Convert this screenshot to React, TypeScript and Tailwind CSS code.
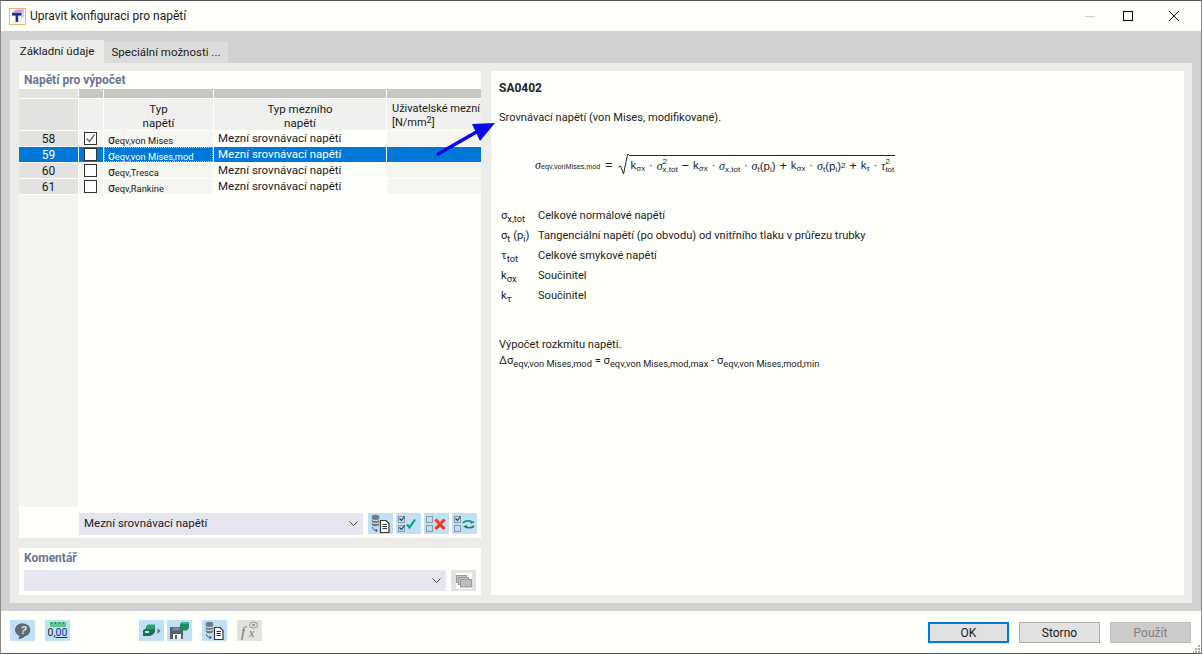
import React from "react";

const Sub = ({ children }: { children: React.ReactNode }) => (
  <span className="relative top-[3px] text-[9.300px] leading-none">{children}</span>
);

const IconBtn = ({ children, off, className = "" }: { children: React.ReactNode; off?: boolean; className?: string }) => (
  <div className={`flex h-[21px] w-[25px] shrink-0 items-center justify-center ${off ? "bg-[#e2e2e0]" : "bg-[#c0e0f8]"} ${className}`}>
    {children}
  </div>
);

const DbDoc = () => (
  <svg width="21" height="19" viewBox="0 0 21 19" fill="none">
    <ellipse cx="5.500" cy="2.500" rx="3.700" ry="1.800" fill="#6f7a82" />
    <path d="M1.800 2.500v8c0 1 1.700 1.800 3.700 1.800s3.700-.8 3.700-1.800v-8" fill="#6f7a82" />
    <path d="M1.800 5.500c1 1.300 6.400 1.300 7.400 0M1.800 8.500c1 1.300 6.400 1.300 7.400 0" stroke="#e4eef4" strokeWidth="1" />
    <path d="M2.500 13c0 2.500 1.500 3.500 4.500 3.500" stroke="#4a5a64" strokeWidth="1" />
    <path d="M5.500 15l2 1.500l-2 1.500" stroke="#4a5a64" strokeWidth="1" />
    <path d="M10.500 6.500h5.500l3 3v9h-8.500z" fill="#fff" stroke="#333" strokeWidth="1.200" />
    <path d="M12.500 10.500h4.500M12.500 12.500h4.500M12.500 14.500h4.500" stroke="#333" strokeWidth="1" />
  </svg>
);

const Cb = ({ x, y, on }: { x: number; y: number; on?: boolean }) => (
  <g>
    <rect x={x + 0.5} y={y + 0.5} width="6" height="6" fill="#c8dcea" stroke="#8a9aa6" />
    {on && <path d={`M${x + 1.500} ${y + 2.500}l2 2l3-4`} stroke="#25343e" strokeWidth="1.100" fill="none" />}
  </g>
);

const Check2 = ({ variant }: { variant: "check" | "x" | "swap" }) => (
  <svg width="23" height="19" viewBox="0 0 23 19" fill="none">
    <Cb x={1} y={2} on={variant !== "x"} />
    <Cb x={1} y={11} on={variant === "check"} />
    {variant === "check" && <path d="M10 10.500l2.500 3l5.500-8" stroke="#00a878" strokeWidth="2.200" />}
    {variant === "x" && <path d="M10.500 5.500l9 9.500M19.500 5.500l-9 9.500" stroke="#f43b1c" strokeWidth="3.200" />}
    {variant === "swap" && (
      <g strokeWidth="1.800">
        <path d="M10 9c2-2.500 6-2.500 9-1" stroke="#12a078" />
        <path d="M22 8l-4 2l-1-3.500z" fill="#12a078" />
        <path d="M21 12c-2 2-6 2-8.500 1" stroke="#2a7a50" />
        <path d="M10 12.500l4-1.500l0 3.500z" fill="#2a7a50" />
      </g>
    )}
  </svg>
);

const Row = ({ n, sel, on, label }: { n: number; sel?: boolean; on?: boolean; label: string }) => (
  <div className="flex h-[16px]">
    <div className={`mb-px mr-px flex w-[59px] items-center justify-center text-[12px] ${sel ? "bg-[#0078d7] text-white" : "bg-[#e2e2e0] text-[#1a1a1a]"}`}>{n}</div>
    <div className={`mb-px mr-px flex w-[24px] items-center justify-center ${sel ? "bg-[#0078d7]" : "bg-[#f5f6ef]"}`}>
      <div className="-ml-px flex h-[13px] w-[13px] items-center justify-center border border-[#333] bg-white">
        {on && (
          <svg width="11" height="11" viewBox="0 0 11 11" fill="none">
            <path d="M1.500 5.500l3 3l5-7" stroke="#666" strokeWidth="1.300" />
          </svg>
        )}
      </div>
    </div>
    <div className={`mb-px mr-px flex w-[109px] items-center pl-[4px] whitespace-nowrap ${sel ? "bg-[#0078d7] text-white outline-1 -outline-offset-1 outline-dotted outline-[#e8b060]" : "bg-[#f5f6ef] text-[#1a1a1a]"}`}>
      <span className="relative top-px text-[12px]">σ</span><span className="relative top-[2px] text-[9.300px]">{label}</span>
    </div>
    <div className={`mb-px mr-px flex w-[172px] items-center pl-[4px] text-[11.500px] ${sel ? "bg-[#0078d7] text-white" : "bg-[#fffffb] text-[#1a1a1a]"}`}>
      Mezní srovnávací napětí
    </div>
    <div className={`mb-px w-[94px] ${sel ? "bg-[#0078d7]" : "bg-[#f5f6ef]"}`} />
  </div>
);

const Sm = ({ children }: { children: React.ReactNode }) => <span className="relative top-[2px] text-[8px]">{children}</span>;
const Gr = ({ children }: { children: React.ReactNode }) => <span className="[font-family:'Liberation_Serif',serif] italic text-[12px]">{children}</span>;
const Ss = ({ sup, sub }: { sup: string; sub: string }) => (
  <span className="flex flex-col text-[8px] leading-[8px]"><span>{sup}</span><span>{sub}</span></span>
);

const Formula = () => (
  <div className="mt-[21px] flex h-[32px] items-center pl-[36px] text-[#222] [font-family:'Liberation_Sans',sans-serif] text-[11.500px] whitespace-nowrap">
    <span className="flex w-[362px] items-center pt-[4px]">
      <Gr>σ</Gr>
      <span className="relative top-[2px] w-[56px] shrink-0 text-[7.200px]">eqv,vonMises,mod</span>
      <span className="ml-[8px] mr-[5px] text-[13px]">=</span>
      <svg width="11" height="22" viewBox="0 0 11 22" fill="none" className="shrink-0">
        <path d="M0.500 13l2-1l3 8l4-19.500h1.500" stroke="#222" strokeWidth="1" />
      </svg>
      <span className="flex h-[21px] w-[266px] shrink-0 items-center justify-between border-t border-[#222] pl-[2px] pt-[1px]">
        <span>k<Sm>σx</Sm></span><span>·</span>
        <span className="flex items-center"><Gr>σ</Gr><Ss sup="2" sub="x,tot" /></span>
        <span className="text-[13px]">−</span>
        <span>k<Sm>σx</Sm></span><span>·</span>
        <span><Gr>σ</Gr><Sm>x,tot</Sm></span><span>·</span>
        <span><Gr>σ</Gr><Sm>t</Sm>(p<Sm>i</Sm>)</span>
        <span className="text-[13px]">+</span>
        <span>k<Sm>σx</Sm></span><span>·</span>
        <span><Gr>σ</Gr><Sm>t</Sm>(p<Sm>i</Sm>)<sup className="relative -top-[2px] align-baseline text-[8px]">2</sup></span>
        <span className="text-[13px]">+</span>
        <span>k<Sm>τ</Sm></span><span>·</span>
        <span className="flex items-center"><Gr>τ</Gr><Ss sup="2" sub="tot" /></span>
      </span>
    </span>
  </div>
);

const Legend = ({ sym, text }: { sym: React.ReactNode; text: string }) => (
  <div className="flex h-[20px] items-center">
    <span className="w-[39px] pl-[2px] text-[11.200px]">{sym}</span>
    <span>{text}</span>
  </div>
);

const Chevron = () => (
  <svg width="9" height="6" viewBox="0 0 9 6" fill="none"><path d="M0.500 0.500l4 4l4-4" stroke="#444" /></svg>
);

export default function App() {
  return (
    <div className="relative flex h-[654px] w-[1202px] flex-col overflow-hidden border-x border-y border-x-[#8a8a8a] border-y-[#555] bg-white text-[12px] text-[#1a1a1a] [font-family:'Roboto','Liberation_Sans',sans-serif]">
      {/* title bar */}
      <div className="flex h-[30px] shrink-0 items-center bg-[#fffffb] pl-[8px]">
        <svg width="17" height="17" viewBox="0 0 17 17" fill="none" className="shrink-0">
          <rect x="0.500" y="0.500" width="16" height="16" fill="#fff" stroke="#f0b070" />
          <path d="M3 5l4-3.500h8v3l-3 3H3z" fill="#b9a0e8" />
          <path d="M12 4.500l3-3v7l-3 3z" fill="#d8c8f4" />
          <path d="M3 5h9.500v2.500H9.200V14H6.600V7.500H3z" fill="#2c2a88" />
        </svg>
        <span className="ml-[4px] text-[12px] text-[#1a1a1a]">Upravit konfiguraci pro napětí</span>
        <div className="ml-auto flex items-center">
          <div className="mr-[28px] h-px w-[10px] bg-[#ccc]" />
          <div className="mr-[36px] h-[10px] w-[10px] border border-black" />
          <svg width="10" height="10" viewBox="0 0 10 10" className="mr-[22px]"><path d="M0 0l10 10M10 0L0 10" stroke="#111" strokeWidth="1" /></svg>
        </div>
      </div>

      {/* main */}
      <div className="flex h-[580px] shrink-0 flex-col bg-[#d1d1d1] px-[9px] pb-[8px] pt-[9px]">
        <div className="flex h-[23px] shrink-0 items-stretch text-[11.500px]">
          <div className="flex w-[94px] items-center justify-center bg-[#ecece8]">Základní údaje</div>
          <div className="mt-[2px] flex w-[124px] items-center justify-center bg-[#dcdcdb]">Speciální možnosti ...</div>
        </div>
        <div className="flex min-h-0 flex-1 gap-[10px] bg-[#ecece8] py-[8px] pl-[9px] pr-[8px]">
          {/* left col */}
          <div className="flex w-[462px] shrink-0 flex-col gap-[10px]">
            <div className="flex h-[467px] flex-col bg-[#fffffb]">
              <div className="flex h-[18px] shrink-0 items-center pl-[5px] text-[12px] font-bold text-[#6a7596]">Napětí pro výpočet</div>
              <div className="flex h-[9px] shrink-0">
                <div className="mr-px w-[59px] bg-[#e2e2e0]" />
                <div className="mr-px w-[24px] bg-[#c8c8c5]" />
                <div className="mr-px w-[109px] bg-[#c8c8c5]" />
                <div className="mr-px w-[172px] bg-[#c8c8c5]" />
                <div className="w-[94px] bg-[#c8c8c5]" />
              </div>
              <div className="mt-px flex h-[31px] shrink-0 text-[11.500px] leading-[14px]">
                <div className="mr-px w-[59px] bg-[#e2e2e0]" />
                <div className="mr-px w-[24px] bg-[#f0f0ef]" />
                <div className="mr-px flex w-[109px] flex-col items-center justify-center bg-[#f0f0ef] pt-[2px]"><span>Typ</span><span>napětí</span></div>
                <div className="mr-px flex w-[172px] flex-col items-center justify-center bg-[#f0f0ef] pt-[2px]"><span>Typ mezního</span><span>napětí</span></div>
                <div className="flex w-[94px] flex-col justify-center bg-[#f0f0ef] pl-[5px] pt-[2px] text-[11px] whitespace-nowrap"><span>Uživatelské mezní</span><span>[N/mm<sup className="relative -top-[3px] align-baseline text-[9px]">2</sup>]</span></div>
              </div>
              <div className="mt-px shrink-0">
                <Row n={58} on label="eqv,von Mises" />
                <Row n={59} sel label="eqv,von Mises,mod" />
                <Row n={60} label="eqv,Tresca" />
                <Row n={61} label="eqv,Rankine" />
              </div>
              <div className="flex min-h-0 flex-1">
                <div className="w-[59px] bg-[#f4f4f1]" />
              </div>
              <div className="flex h-[31px] shrink-0 items-start pt-[6px]">
                <div className="ml-[60px] flex h-[22px] w-[284px] items-center justify-between bg-[#e6e6f0] pl-[5px] pr-[5px] text-[11.500px]">
                  <span>Mezní srovnávací napětí</span>
                  <Chevron />
                </div>
                <IconBtn className="ml-[5px]"><DbDoc /></IconBtn>
                <IconBtn className="ml-[3px]"><Check2 variant="check" /></IconBtn>
                <IconBtn className="ml-[3px]"><Check2 variant="x" /></IconBtn>
                <IconBtn className="ml-[3px]"><Check2 variant="swap" /></IconBtn>
              </div>
            </div>
            {/* comment */}
            <div className="flex min-h-0 flex-1 flex-col bg-[#fffffb] pl-[5px]">
              <div className="mb-[2px] flex h-[20px] items-center font-bold text-[#6a7596]">Komentář</div>
              <div className="flex items-center">
                <div className="flex h-[21px] w-[422px] items-center justify-end bg-[#e6e6f0] pr-[5px]">
                  <Chevron />
                </div>
                <IconBtn off className="ml-[5px]">
                  <svg width="16" height="16" viewBox="0 0 16 16" fill="none">
                    <rect width="16" height="16" fill="#fff" />
                    <rect x="0.500" y="2.500" width="10" height="7" fill="#c4c4c4" stroke="#999" />
                    <rect x="2.500" y="4.500" width="10" height="7" fill="#c4c4c4" stroke="#999" />
                    <rect x="4.500" y="6.500" width="11" height="7.500" fill="#bbb" stroke="#999" />
                  </svg>
                </IconBtn>
              </div>
            </div>
          </div>
          {/* right */}
          <div className="flex-1 bg-[#fffffb] pl-[8px] pt-[9px] text-[11.100px] text-[#222]">
            <div className="h-[16px] text-[12px] font-bold leading-[16px]">SA0402</div>
            <div className="mt-[14px] h-[16px] leading-[16px]">Srovnávací napětí (von Mises, modifikované).</div>
            <Formula />
            <div className="mt-[27px]">
              <Legend sym={<>σ<Sub>x,tot</Sub></>} text="Celkové normálové napětí" />
              <Legend sym={<>σ<Sub>t</Sub> (p<Sub>i</Sub>)</>} text="Tangenciální napětí (po obvodu) od vnitřního tlaku v průřezu trubky" />
              <Legend sym={<>τ<Sub>tot</Sub></>} text="Celkové smykové napětí" />
              <Legend sym={<>k<Sub>σx</Sub></>} text="Součinitel" />
              <Legend sym={<>k<Sub>τ</Sub></>} text="Součinitel" />
            </div>
            <div className="mt-[31px] h-[16px] leading-[16px]">Výpočet rozkmitu napětí.</div>
            <div className="h-[16px] text-[11.200px] leading-[16px]">Δσ<Sub>eqv,von Mises,mod</Sub> = σ<Sub>eqv,von Mises,mod,max</Sub> - σ<Sub>eqv,von Mises,mod,min</Sub></div>
          </div>
        </div>
      </div>

      {/* bottom bar */}
      <div className="relative flex min-h-0 flex-1 items-start bg-[#fffffb] pl-[9px] pt-[9px]">
        <IconBtn>
          <svg width="18" height="18" viewBox="0 0 18 18"><path d="M9.500 1.500a7 6.500 0 0 1 1.500 12.800a7.500 7.500 0 0 1-7 2.700c1-.8 1.300-1.800 1.200-3.200A7 6.500 0 0 1 9.500 1.500z" fill="#5f6a72" /><text x="9.500" y="12" textAnchor="middle" fontSize="11" fontWeight="700" fontStyle="italic" fill="#d4e8f6" fontFamily="Liberation Sans, sans-serif">?</text></svg>
        </IconBtn>
        <IconBtn className="ml-[10px] flex-col">
          <div className="flex h-[5px] w-[16px] items-start justify-around bg-[#5cc888]">
            <span className="h-[2px] w-px bg-[#2a8a58]" /><span className="h-[2px] w-px bg-[#2a8a58]" /><span className="h-[2px] w-px bg-[#2a8a58]" /><span className="h-[2px] w-px bg-[#2a8a58]" />
          </div>
          <span className="text-[10.500px] leading-[12px] text-[#222]">0,<span className="text-[#1a2a8a] underline decoration-[#1a2a8a]">00</span></span>
        </IconBtn>
        <IconBtn className="ml-[69px]">
          <svg width="20" height="16" viewBox="0 0 20 16"><path d="M1 7l3-1.500V3.500h7l2-1.500v7l-2 2.500l-3 1.500H1z" fill="#1f6f58" /><path d="M6 1.500h7v3l-2 2H4.500V3z" fill="#28a078" /><path d="M3 8h4v2H3z" fill="#bfe8d8" /><path d="M15.500 5l3 3l-3 3z" fill="#6a6a6a" /></svg>
        </IconBtn>
        <IconBtn className="ml-[3px]">
          <svg width="21" height="19" viewBox="0 0 21 19"><path d="M1 6h13v12H1z" fill="#55606a" /><path d="M3.500 6.500h7v3h-7z" fill="#7f8a92" /><path d="M4 13h8v5H4z" fill="#f4f8fb" /><path d="M6 14h2v4H6z" fill="#55606a" /><path d="M11 3l2-2h7v6l-2 2.500h-7z" fill="#1f8a68" /><path d="M13 1h7v2h-7z" fill="#36b088" /></svg>
        </IconBtn>
        <IconBtn className="ml-[10px]"><DbDoc /></IconBtn>
        <IconBtn off className="ml-[10px]">
          <svg width="21" height="19" viewBox="0 0 21 19" fill="none"><ellipse cx="14.500" cy="4" rx="4" ry="3" stroke="#999" /><circle cx="14.500" cy="4" r="1.300" fill="#888" /><text x="2" y="16" fontSize="15" fontStyle="italic" fill="#777" fontFamily="Liberation Serif, serif">f</text><text x="10" y="16" fontSize="12" fontStyle="italic" fill="#777" fontFamily="Liberation Serif, serif">x</text></svg>
        </IconBtn>
        <div className="ml-auto flex gap-[10px] pr-[10px] pt-[2px]">
          <div className="flex h-[21px] w-[81px] items-center justify-center border-2 border-[#0078d7] bg-[#e1e1e1]">OK</div>
          <div className="flex h-[21px] w-[81px] items-center justify-center border border-[#adadad] bg-[#e1e1e1]">Storno</div>
          <div className="flex h-[21px] w-[81px] items-center justify-center border border-[#bfbfbf] bg-[#cccccc] text-[#808080]">Použít</div>
        </div>
        <svg className="absolute bottom-0 right-0" width="8" height="8" viewBox="0 0 8 8"><path d="M5 0h2v2H5zM2 3h2v2H2zM5 3h2v2H5zM0 6h1v2H0zM2 6h2v2H2zM5 6h2v2H5z" fill="#aaa" /></svg>
      </div>

      {/* arrow overlay */}
      <svg className="pointer-events-none absolute -left-px -top-px" width="1202" height="654" viewBox="0 0 1202 654" fill="none">
        <path d="M438 154L480 130" stroke="#0a0ae6" strokeWidth="3.500" strokeLinecap="round" />
        <path d="M495 123L472 124L480 141z" fill="#0a0ae6" />
      </svg>
    </div>
  );
}
